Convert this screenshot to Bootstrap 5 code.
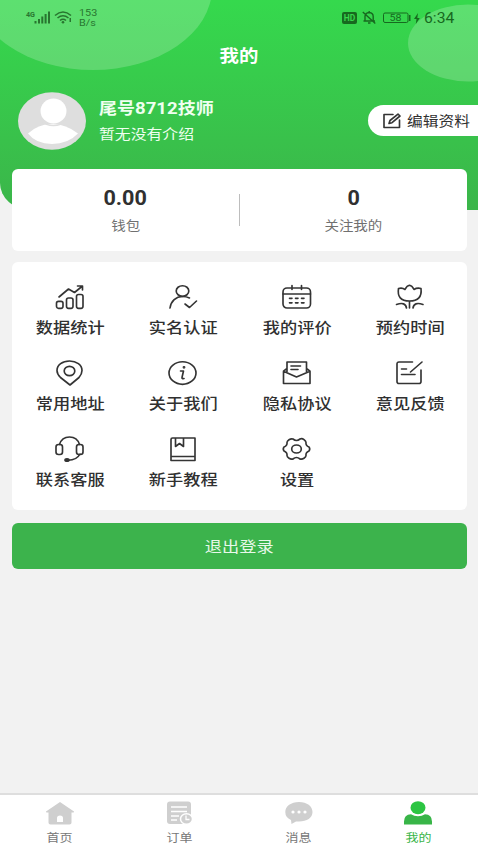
<!DOCTYPE html>
<html lang="zh-CN">
<head>
<meta charset="utf-8">
<meta name="viewport" content="width=device-width, initial-scale=1">
<title>我的</title>
<link rel="stylesheet" href="https://cdn.jsdelivr.net/npm/bootstrap@5.3.0/dist/css/bootstrap.min.css">
<style>
body{font-family:"Noto Sans CJK SC","Noto Sans",sans-serif;background:#f2f2f2;color:#303030;line-height:1;overflow:hidden}
.screen{width:478px;height:850px}
.hero{height:210px;background:linear-gradient(#35d94d,#3bb54a);border-bottom-left-radius:30px 27px;overflow:hidden}
.hero-bg{left:0;top:0}
.hero-body{height:210px}
.wide{display:inline-block;transform:scaleX(1.14);white-space:nowrap}
.from-left{transform-origin:left center}
.status{height:35px;padding:0 24px 0 24px;color:#17691f}
.speed{font:9.500px/10px Roboto,sans-serif;color:#28752f;margin-left:4px}
.clock{font:13.8px/18px Roboto,sans-serif;margin-left:2px;width:30px;padding-top:1px}
.title{height:39px;font-size:17px;font-weight:700;color:#fff}
.profile{height:93px;padding-left:18px}
.who{padding-left:13px;color:#effff0}
.who-name{font-size:15.8px;font-weight:700;line-height:24px}
.digits{font-family:Roboto,sans-serif;font-size:16.3px}
.who-note{font-size:13.9px;line-height:24px}
.edit{width:110px;height:31px;border-radius:16px 0 0 16px;background:#fff;color:#303030;font-size:13.8px;padding-left:15px}
.edit svg{margin-right:6px}
.panel{margin:0 11px 0 12px;background:#fff;border-radius:6px}
.stats{height:82px;margin-top:-41px}
.stat-num{font-family:Roboto,sans-serif;font-size:20px;font-weight:700;line-height:24px;height:29px}
.stat-num .wide{transform:scaleX(1.08)}
.stat-label{font-size:12.7px;color:#707070;line-height:20px}
.rule{width:1px;height:32px;background:#bdbdbd}
.tools{height:248px;margin-top:11px;padding:20px 0 0 1px}
.tool{height:76px}
.tool svg,.tabs svg,.edit svg{display:block}
.tool-name{font-size:15.1px;font-weight:500;line-height:20px;margin-top:4px}
.line{fill:none;stroke:#343434;stroke-width:1.65;stroke-linecap:round;stroke-linejoin:round}
.logout{height:46px;margin:13px 11px 0 12px;border-radius:6px;background:#3cb34c;color:#e8f8ea;font-size:15.1px;padding:0 0 2px;border:0}
.tabs{height:57px;background:#fff;border-top:2px solid #dedede;padding-top:5px}
.tab-name{font-size:11.4px;line-height:16px;color:#777;margin-top:3px}
.tab-name.current{color:#38b548}
</style>
<script src="https://cdn.jsdelivr.net/npm/bootstrap@5.3.0/dist/js/bootstrap.bundle.min.js"></script>
</head>
<body>
<div class="screen d-flex flex-column">
  <header class="hero position-relative flex-shrink-0">
    <svg class="hero-bg position-absolute" width="478" height="210"><g fill="#fff" fill-opacity=".2"><ellipse cx="93" cy="-12" rx="119" ry="82"/><ellipse cx="468" cy="43" rx="60" ry="38.5"/></g></svg>
    <div class="hero-body position-relative">
      <div class="status d-flex align-items-center">
        <svg width="51" height="34" viewBox="24 0 51 34" fill="#28752f"><text x="26" y="16" font-family="Roboto" font-weight="700" font-size="7" textLength="9" lengthAdjust="spacingAndGlyphs">4G</text><path d="M34.5 20h2v2.5h-2zM38 18h2v4.500h-2zM41.300 15.500h2v7h-2zM44.600 13h2v9.500h-2zM48 10.500h2v12h-2z"/><g fill="none" stroke="#28752f" stroke-width="1.600"><path d="M55 14.500q8-7 16 0M57.500 17q5.500-4.500 11 0"/><path d="M60 19.500q3-2.500 6 0" /></g><circle cx="63" cy="21.300" r="1.300"/><path d="M69.500 17h1.500v4h-1.500z"/></svg>
        <div class="speed"><span class="wide from-left">153</span><br><span class="wide from-left">B/s</span></div>
        <svg class="ms-auto" width="80" height="34" viewBox="342 0 80 34"><rect x="342" y="11" width="15" height="12" rx="2" fill="#17691f"/><text x="343.700" y="20.300" font-family="Roboto" font-size="8.500" font-weight="700" fill="#38d64c" textLength="11.500" lengthAdjust="spacingAndGlyphs">HD</text><g fill="none" stroke="#17691f" stroke-width="1.400"><path d="M363.500 20h11.500M365 19.500v-4q0-3.500 4.200-4 4 .5 4 4v4M369.200 10v1.500M368 22h2.500M362.800 11l12.500 11.500"/><rect x="383.500" y="12" width="24.500" height="9.500" rx="1.500" stroke-width="1"/></g><path d="M409 14h1.500v6H409z" fill="#17691f"/><text x="389.500" y="20.300" font-family="Roboto" font-size="9.500" fill="#17691f" textLength="12" lengthAdjust="spacingAndGlyphs">58</text><path d="M418 12l-4 6h2.500l-.7 5 4-6h-2.500z" fill="#17691f"/></svg>
        <div class="clock"><span class="wide from-left">6:34</span></div>
      </div>
      <div class="title d-flex align-items-center justify-content-center"><span class="wide">我的</span></div>
      <div class="profile d-flex align-items-center">
        <svg width="68" height="58" viewBox="0 0 68 58"><ellipse cx="34" cy="29" rx="34" ry="28.700" fill="#dedede"/><ellipse cx="35.500" cy="19" rx="13" ry="12.500" fill="#fff"/><path d="M10 41.500Q20 32 34 32t26 9.500Q50 52 34 52T10 41.500z" fill="#fff"/><path d="M23 29q5 4.500 12.500 4.500T48 29" fill="none" stroke="#dedede" stroke-width="1.500"/></svg>
        <div class="who"><div class="who-name"><span class="wide from-left">尾号<span class="digits">8712</span>技师</span></div><div class="who-note"><span class="wide from-left">暂无没有介绍</span></div></div>
        <div class="edit ms-auto d-flex align-items-center"><svg width="18" height="16" viewBox="0 0 18 16" class="line"><path d="M10 1.500H1v13h15.500V7M6 10.500l1-3L15 1.200l2 1.800-8 6.700z"/></svg><span class="wide from-left">编辑资料</span></div>
      </div>
    </div>
  </header>

  <section class="panel stats position-relative d-flex align-items-center flex-shrink-0 text-center">
    <div class="flex-fill w-50"><div class="stat-num"><span class="wide">0.00</span></div><div class="stat-label"><span class="wide">钱包</span></div></div>
    <div class="rule"></div>
    <div class="flex-fill w-50"><div class="stat-num"><span class="wide">0</span></div><div class="stat-label"><span class="wide">关注我的</span></div></div>
  </section>

  <section class="panel tools flex-shrink-0">
    <div class="row row-cols-4 g-0">
      <div class="col tool d-flex flex-column align-items-center"><svg class="line" width="32" height="30"><rect x="2.500" y="19.300" width="6.500" height="7" rx="2"/><rect x="12.500" y="16" width="6.500" height="10.300" rx="2"/><rect x="22.500" y="12.500" width="6.500" height="13.800" rx="2"/><path d="M5 15l9.500-8 6 3.500 8-6.500M23.500 4h5v4"/></svg><div class="tool-name"><span class="wide">数据统计</span></div></div>
      <div class="col tool d-flex flex-column align-items-center"><svg class="line" width="32" height="30"><ellipse cx="15.500" cy="9" rx="6.300" ry="5.300"/><path d="M3 26c1-7 6-11.500 12.500-11.500 3 0 5 .5 7 1.500M18 22l4.500 3.500L29.500 19"/></svg><div class="tool-name"><span class="wide">实名认证</span></div></div>
      <div class="col tool d-flex flex-column align-items-center"><svg class="line" width="32" height="30"><rect x="2" y="6" width="27.500" height="20" rx="4"/><path d="M2 12h27.500M11 3.500v4M20.500 3.500v4M8.500 16.300H11M14.500 16.300H17M20.500 16.300H23M8.500 20.800H11M14.500 20.800H17M20.500 20.800H23"/></svg><div class="tool-name"><span class="wide">我的评价</span></div></div>
      <div class="col tool d-flex flex-column align-items-center"><svg class="line" width="32" height="30"><path d="M4.500 6.500q4-1 6.500 1 2-4 4.500-4.300Q18 3.500 20 7.500q3-2 7-1Q28.500 19 15.500 19T4.500 6.500zM15.500 19v7M2.500 22.500q9-3 10 3.500M29 22.500q-9-3-10 3.500"/></svg><div class="tool-name"><span class="wide">预约时间</span></div></div>
      <div class="col tool d-flex flex-column align-items-center"><svg class="line" width="32" height="30"><path d="M16 27L6.500 19.500Q3 16 3 12.500C3 7 8.500 3 15.500 3S28 7 28 12.500q0 3.500-3 7z"/><ellipse cx="15.500" cy="13" rx="5.300" ry="4.600"/></svg><div class="tool-name"><span class="wide">常用地址</span></div></div>
      <div class="col tool d-flex flex-column align-items-center"><svg class="line" width="32" height="30"><ellipse cx="15.500" cy="15" rx="13.500" ry="11.300"/><path d="M13.500 13h3l-1.500 6.500q-.3 1.500 2 1"/><circle cx="17" cy="9.300" r=".6"/></svg><div class="tool-name"><span class="wide">关于我们</span></div></div>
      <div class="col tool d-flex flex-column align-items-center"><svg class="line" width="32" height="30"><path d="M6 13.500V4h19.500v9.500M6 10.500l-3.500 2.700v12.300h26.500V13.200L25.500 10.500M2.500 13.200L15.500 19 29 13.200M10 8h9.500M10 11.500h7"/></svg><div class="tool-name"><span class="wide">隐私协议</span></div></div>
      <div class="col tool d-flex flex-column align-items-center"><svg class="line" width="32" height="30"><path d="M18.500 4H5q-2 0-2 2v17.500q0 2 2 2h20q2 0 2-2V12M28 4L16.500 14M7.500 11h5M7.500 16.500h13.500"/></svg><div class="tool-name"><span class="wide">意见反馈</span></div></div>
      <div class="col tool d-flex flex-column align-items-center"><svg class="line" width="32" height="30"><path d="M5.500 10.500C7 5.500 11 3 15.500 3S24 5.500 25.500 10.500M26 20q-3 6-12 6.200"/><rect x="2" y="10.500" width="6.500" height="10" rx="2.500"/><rect x="22.500" y="10.500" width="6.500" height="10" rx="2.500"/><ellipse cx="13" cy="26" rx="2" ry="1.200" fill="#343434"/></svg><div class="tool-name"><span class="wide">联系客服</span></div></div>
      <div class="col tool d-flex flex-column align-items-center"><svg class="line" width="32" height="30"><path d="M5.500 4H28v22.500H4V5.500Q4 4 5.500 4zM4 22.500h24M8.500 4v8.500l4-3 4 3V4"/></svg><div class="tool-name"><span class="wide">新手教程</span></div></div>
      <div class="col tool d-flex flex-column align-items-center"><svg class="line" width="32" height="30"><path d="M12 5q3.500 3 7 0 2-1 4 .7t2 2.800q-.5 3 3 4.500 1.500 2 0 4-3.500 1.500-3 4.500 0 1.500-2 2.800t-4 .7q-3.500-3-7 0-2 .6-4-.7T6 21.500Q6.500 18.500 3 17q-1.500-2 0-4 3.500-1.500 3-4.500 0-1.500 2-2.800T12 5z"/><ellipse cx="15.500" cy="15" rx="4.800" ry="4"/></svg><div class="tool-name"><span class="wide">设置</span></div></div>
    </div>
  </section>

  <button type="button" class="btn logout flex-shrink-0"><span class="wide">退出登录</span></button>

  <nav class="tabs d-flex mt-auto flex-shrink-0">
    <div class="flex-fill w-25 d-flex flex-column align-items-center"><svg width="30" height="26"><path d="M15 2l14 9.500q.5 1-1 1h-1.500v10.200q0 1.800-2 1.800H5.500q-2 0-2-1.800V12.500H2q-1.500 0-1-1z" fill="#cfcfcf"/><path d="M12 22v-4q0-2.500 3-2.500t3 2.500v4z" fill="#fff"/></svg><div class="tab-name"><span class="wide">首页</span></div></div>
    <div class="flex-fill w-25 d-flex flex-column align-items-center"><svg width="30" height="26"><rect x="3" y="1.500" width="24" height="22.500" rx="3" fill="#cfcfcf"/><path d="M7 7h16M7 11.500h16M7 16h8M7 20h6" stroke="#fff" stroke-width="1.300"/><ellipse cx="22.500" cy="19" rx="6" ry="5.300" fill="#cfcfcf" stroke="#fff" stroke-width="1.500"/><path d="M22 15.500v4h3.500" fill="none" stroke="#fff" stroke-width="1.300"/></svg><div class="tab-name"><span class="wide">订单</span></div></div>
    <div class="flex-fill w-25 d-flex flex-column align-items-center"><svg width="30" height="26"><path d="M15 2c8 0 13.500 4.300 13.500 10S23 21.500 15 21.500h-3L7.500 24l-.5-4Q1.300 17.500 1.300 12C1.300 6.300 7 2 15 2z" fill="#cfcfcf"/><g fill="#fff"><circle cx="9" cy="12" r="1.600"/><circle cx="15" cy="12" r="1.600"/><circle cx="21" cy="12" r="1.600"/></g></svg><div class="tab-name"><span class="wide">消息</span></div></div>
    <div class="flex-fill w-25 d-flex flex-column align-items-center"><svg width="30" height="26"><ellipse cx="15" cy="7.700" rx="7.500" ry="6.500" fill="#2cc542"/><path d="M1 24.500v-3q0-6.800 7-7.200 3 2 7 2t7-2q7 .4 7 7.200v3z" fill="#38b548"/></svg><div class="tab-name current"><span class="wide">我的</span></div></div>
  </nav>
</div>
</body>
</html>
